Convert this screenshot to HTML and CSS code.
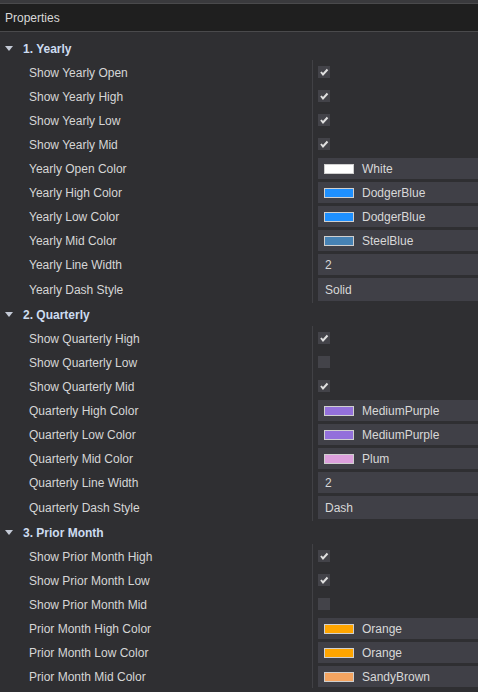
FILE: index.html
```html
<!DOCTYPE html>
<html>
<head>
<meta charset="utf-8">
<link rel="stylesheet" href="styles.css">
</head>
<body>
<div class="topstrip"></div>
<div class="title">Properties</div>
<div class="grid">
  <div class="section">
    <div class="sec-head"><span class="tri"></span>1. Yearly</div>
    <div class="row"><div class="label">Show Yearly Open</div><div class="val"><span class="cb on"><svg viewBox="0 0 12 12"><polyline points="3,6 5,8.5 9.5,3.5"/></svg></span></div></div>
    <div class="row"><div class="label">Show Yearly High</div><div class="val"><span class="cb on"><svg viewBox="0 0 12 12"><polyline points="3,6 5,8.5 9.5,3.5"/></svg></span></div></div>
    <div class="row"><div class="label">Show Yearly Low</div><div class="val"><span class="cb on"><svg viewBox="0 0 12 12"><polyline points="3,6 5,8.5 9.5,3.5"/></svg></span></div></div>
    <div class="row"><div class="label">Show Yearly Mid</div><div class="val"><span class="cb on"><svg viewBox="0 0 12 12"><polyline points="3,6 5,8.5 9.5,3.5"/></svg></span></div></div>
    <div class="row"><div class="label">Yearly Open Color</div><div class="val"><div class="box"><span class="sw c-white"></span>White</div></div></div>
    <div class="row"><div class="label">Yearly High Color</div><div class="val"><div class="box"><span class="sw c-dodger"></span>DodgerBlue</div></div></div>
    <div class="row"><div class="label">Yearly Low Color</div><div class="val"><div class="box"><span class="sw c-dodger"></span>DodgerBlue</div></div></div>
    <div class="row"><div class="label">Yearly Mid Color</div><div class="val"><div class="box"><span class="sw c-steel"></span>SteelBlue</div></div></div>
    <div class="row"><div class="label">Yearly Line Width</div><div class="val"><div class="box text">2</div></div></div>
    <div class="row tall"><div class="label">Yearly Dash Style</div><div class="val"><div class="box text">Solid</div></div></div>
  </div>
  <div class="section">
    <div class="sec-head"><span class="tri"></span>2. Quarterly</div>
    <div class="row"><div class="label">Show Quarterly High</div><div class="val"><span class="cb on"><svg viewBox="0 0 12 12"><polyline points="3,6 5,8.5 9.5,3.5"/></svg></span></div></div>
    <div class="row"><div class="label">Show Quarterly Low</div><div class="val"><span class="cb"></span></div></div>
    <div class="row"><div class="label">Show Quarterly Mid</div><div class="val"><span class="cb on"><svg viewBox="0 0 12 12"><polyline points="3,6 5,8.5 9.5,3.5"/></svg></span></div></div>
    <div class="row"><div class="label">Quarterly High Color</div><div class="val"><div class="box"><span class="sw c-purple"></span>MediumPurple</div></div></div>
    <div class="row"><div class="label">Quarterly Low Color</div><div class="val"><div class="box"><span class="sw c-purple"></span>MediumPurple</div></div></div>
    <div class="row"><div class="label">Quarterly Mid Color</div><div class="val"><div class="box"><span class="sw c-plum"></span>Plum</div></div></div>
    <div class="row"><div class="label">Quarterly Line Width</div><div class="val"><div class="box text">2</div></div></div>
    <div class="row tall"><div class="label">Quarterly Dash Style</div><div class="val"><div class="box text">Dash</div></div></div>
  </div>
  <div class="section">
    <div class="sec-head"><span class="tri"></span>3. Prior Month</div>
    <div class="row"><div class="label">Show Prior Month High</div><div class="val"><span class="cb on"><svg viewBox="0 0 12 12"><polyline points="3,6 5,8.5 9.5,3.5"/></svg></span></div></div>
    <div class="row"><div class="label">Show Prior Month Low</div><div class="val"><span class="cb on"><svg viewBox="0 0 12 12"><polyline points="3,6 5,8.5 9.5,3.5"/></svg></span></div></div>
    <div class="row"><div class="label">Show Prior Month Mid</div><div class="val"><span class="cb"></span></div></div>
    <div class="row"><div class="label">Prior Month High Color</div><div class="val"><div class="box"><span class="sw c-orange"></span>Orange</div></div></div>
    <div class="row"><div class="label">Prior Month Low Color</div><div class="val"><div class="box"><span class="sw c-orange"></span>Orange</div></div></div>
    <div class="row"><div class="label">Prior Month Mid Color</div><div class="val"><div class="box"><span class="sw c-sandy"></span>SandyBrown</div></div></div>
  </div>
</div>
</body>
</html>
```
FILE: styles.css
```css
html, body {
  margin: 0;
  padding: 0;
  background: #2f2f32;
  font-family: "Liberation Sans", Arial, sans-serif;
  font-size: 12px;
  color: #d6d6d6;
  overflow: hidden;
}
.topstrip {
  height: 3px;
  background: #3a3a3d;
}
.title {
  height: 27px;
  line-height: 28px;
  background: #1f1f1f;
  border-top: 1px solid #4a4a4c;
  border-bottom: 1px solid #4a4a4c;
  padding-left: 5px;
  color: #d8d8d8;
}
.grid {
  padding-top: 4px;
}
.sec-head {
  height: 24px;
  display: flex;
  align-items: center;
  font-weight: bold;
  color: #cddcf0;
  padding-top: 1px;
  box-sizing: border-box;
}
.tri {
  width: 0;
  height: 0;
  border-left: 4.5px solid transparent;
  border-right: 4.5px solid transparent;
  border-top: 5px solid #c4cad6;
  margin-left: 5px;
  margin-right: 10px;
}
.row {
  height: 24px;
  display: grid;
  grid-template-columns: 313px 1fr;
}
.row.tall {
  height: 26px;
}
.label {
  padding-left: 29px;
  padding-top: 1px;
  line-height: 24px;
  white-space: nowrap;
  border-right: 1px solid #414145;
}
.row.tall .label {
  line-height: 26px;
}
.val {
  padding-left: 5px;
  display: flex;
  align-items: flex-start;
}
.cb {
  width: 12px;
  height: 12px;
  margin-top: 6px;
  background: #434349;
  display: block;
}
.cb svg {
  display: block;
  width: 12px;
  height: 12px;
  fill: none;
  stroke: #e0e0e0;
  stroke-width: 2;
}
.box {
  flex: 1;
  height: 21px;
  margin-top: 2px;
  background: #404047;
  display: flex;
  align-items: center;
  padding-left: 6px;
  padding-top: 1px;
  box-sizing: border-box;
  color: #d8d8d8;
}
.row.tall .box {
  height: 23px;
}
.box.text {
  padding-left: 7px;
}
.sw {
  width: 28px;
  height: 8px;
  border: 1px solid #cfcfcf;
  margin-right: 8px;
  margin-top: -1px;
}
.c-white { background: #ffffff; }
.c-dodger { background: #1e90ff; }
.c-steel { background: #4682b4; }
.c-purple { background: #9370db; }
.c-plum { background: #dda0dd; }
.c-orange { background: #ffa500; }
.c-sandy { background: #f4a460; }
```
